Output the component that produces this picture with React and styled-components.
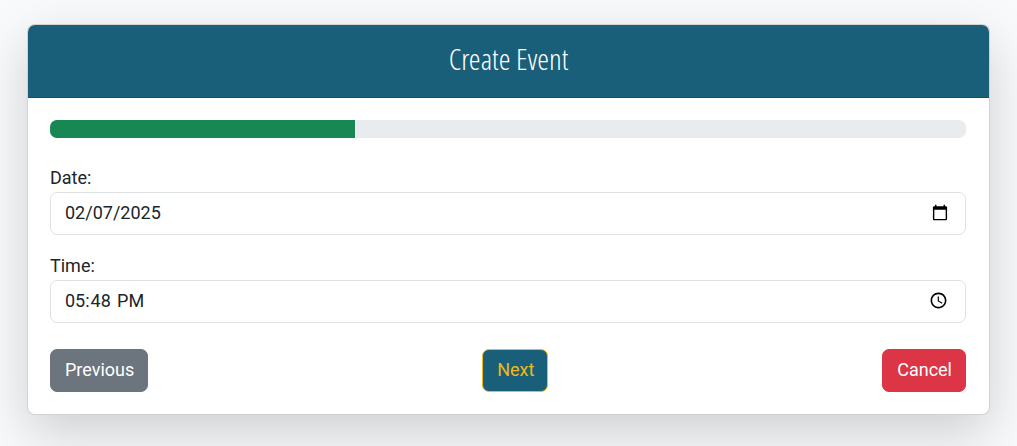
import React, { useState } from "react";
import styled, { createGlobalStyle } from "styled-components";

const GlobalStyle = createGlobalStyle`
  *, *::before, *::after { box-sizing: border-box; }
  body {
    margin: 0;
    background: #f8fafc;
    color: #212529;
    font-family: Roboto, "Liberation Sans", sans-serif;
    font-size: 18px;
    line-height: 27px;
  }
`;

const Page = styled.main`
  padding: 24px 27px 31px;
`;

const Card = styled.section`
  background: #fff;
  border: 1px solid rgba(0, 0, 0, 0.176);
  border-radius: 8px;
  box-shadow: 0 18px 54px rgba(0, 0, 0, 0.175);
`;

const CardHeader = styled.header`
  padding: 18px 18px 22px;
  background: #1a5f7a;
  border-bottom: 1px solid rgba(0, 0, 0, 0.176);
  border-radius: 7px 7px 0 0;
  text-align: center;
`;

const Title = styled.h1`
  margin: 0;
  color: #fff;
  font-family: "Open Sans Condensed Light", "Open Sans Condensed", "Liberation Sans Narrow", sans-serif;
  font-size: 30px;
  font-weight: 300;
  line-height: 32px;
`;

const CardBody = styled.form`
  padding: 22px 23px 22px 22px;
`;

const Progress = styled.div`
  height: 18px;
  margin-bottom: 27px;
  overflow: hidden;
  background: #e9ecef;
  border-radius: 7px;
`;

const ProgressBar = styled.div`
  height: 100%;
  background: #198754;
`;

const Field = styled.div`
  margin-bottom: ${(p) => (p.$last ? 26 : 18)}px;
`;

const Label = styled.label`
  display: block;
  padding-bottom: 2px;
  line-height: 25px;
`;

const Input = styled.input`
  display: block;
  width: 100%;
  height: 43px;
  padding: 6px 14px 8px;
  color: #212529;
  background: #fff;
  border: 1px solid #dee2e6;
  border-radius: 7px;
  font: inherit;
  outline: none;

  &::-webkit-datetime-edit-fields-wrapper,
  &::-webkit-datetime-edit-text,
  &::-webkit-datetime-edit-minute,
  &::-webkit-datetime-edit-hour-field,
  &::-webkit-datetime-edit-day-field,
  &::-webkit-datetime-edit-month-field,
  &::-webkit-datetime-edit-year-field {
    padding: 0;
  }

  &::-webkit-datetime-edit-ampm-field {
    padding: 0 0 0 3px;
  }
`;

const Actions = styled.div`
  display: flex;
  justify-content: space-between;
`;

const tones = {
  secondary: { bg: "#6c757d", border: "#6c757d", text: "#fff" },
  accent: { bg: "#1a5f7a", border: "#f1b913", text: "#f1b913" },
  danger: { bg: "#dc3545", border: "#dc3545", text: "#fff" },
};

const Button = styled.button`
  padding: 6px 13px 8px 14px;
  color: ${(p) => tones[p.$tone].text};
  background: ${(p) => tones[p.$tone].bg};
  border: 1px solid ${(p) => tones[p.$tone].border};
  border-radius: 7px;
  font: inherit;
  cursor: pointer;
`;

export default function App() {
  const [date, setDate] = useState("2025-02-07");
  const [time, setTime] = useState("17:48");
  const step = 1;
  const steps = 3;

  return (
    <>
      <GlobalStyle />
      <Page>
        <Card>
          <CardHeader>
            <Title>Create Event</Title>
          </CardHeader>
          <CardBody onSubmit={(e) => e.preventDefault()}>
            <Progress role="progressbar" aria-label="Form progress" aria-valuemin={0} aria-valuemax={steps} aria-valuenow={step}>
              <ProgressBar style={{ width: `${(step / steps) * 100}%` }} />
            </Progress>
            <Field>
              <Label htmlFor="event-date">Date:</Label>
              <Input id="event-date" type="date" value={date} onChange={(e) => setDate(e.target.value)} />
            </Field>
            <Field $last>
              <Label htmlFor="event-time">Time:</Label>
              <Input id="event-time" type="time" value={time} onChange={(e) => setTime(e.target.value)} />
            </Field>
            <Actions>
              <Button type="button" $tone="secondary">Previous</Button>
              <Button type="submit" $tone="accent">Next</Button>
              <Button type="button" $tone="danger">Cancel</Button>
            </Actions>
          </CardBody>
        </Card>
      </Page>
    </>
  );
}
